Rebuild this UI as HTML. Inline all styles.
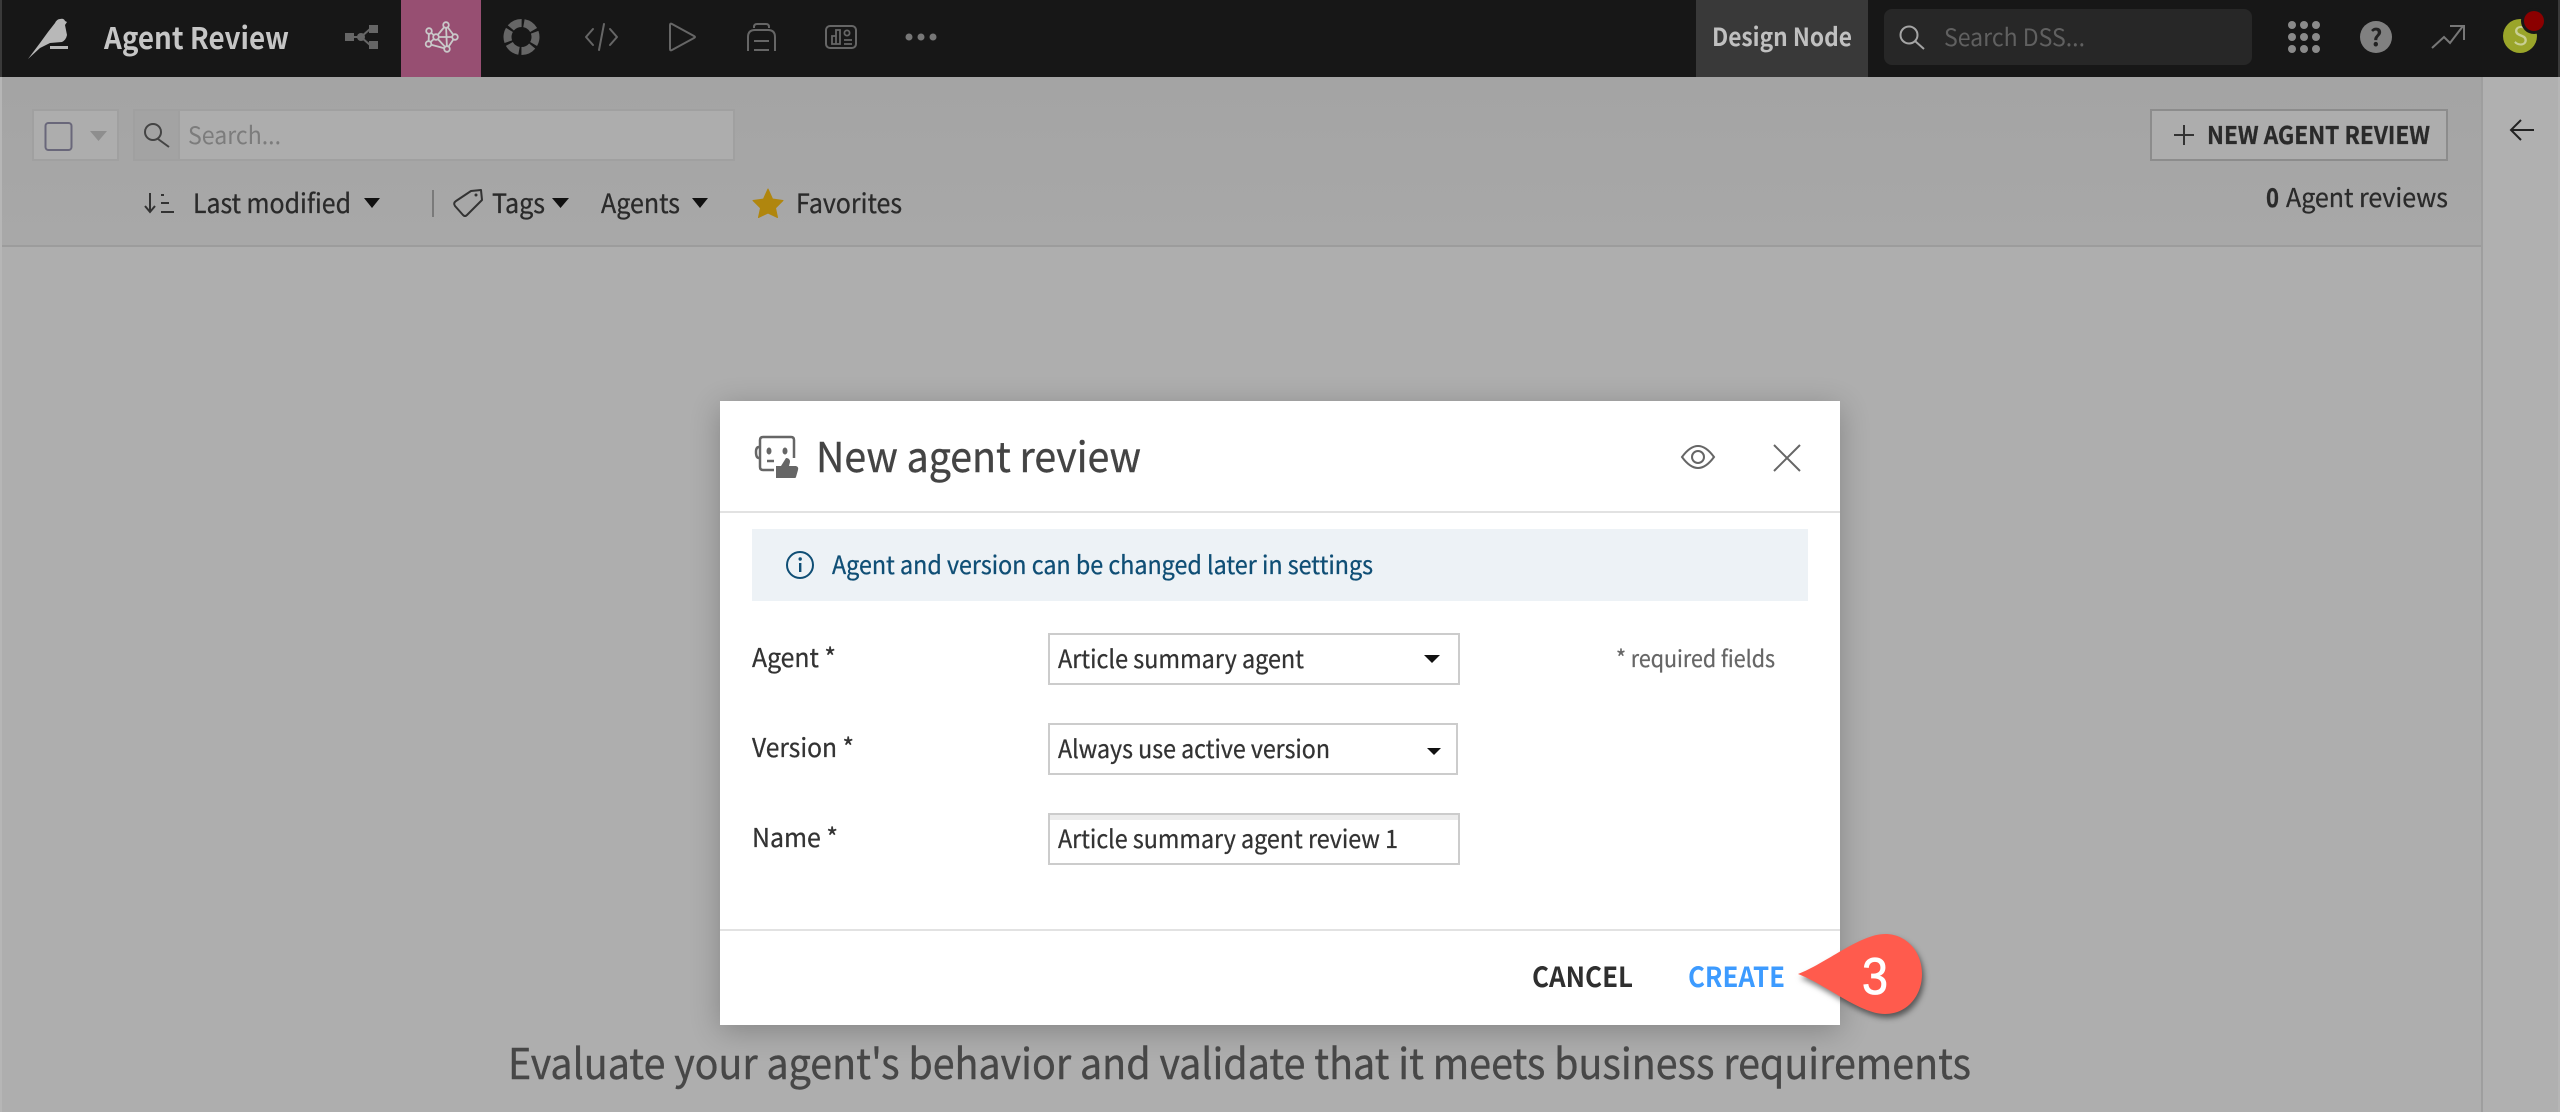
<!DOCTYPE html>
<html lang="en">
<head>
<meta charset="utf-8">
<title>Agent Review</title>
<style>
html,body{margin:0;padding:0;width:2560px;height:1112px;overflow:hidden;background:#aeaeae}
#modal{position:absolute;left:720px;top:401px;width:1120px;height:624px;background:#fff;box-shadow:0 6px 28px rgba(0,0,0,.24)}
#toolbar{position:absolute;left:0;top:77px;width:2481px;height:168px;background:linear-gradient(#a4a4a4,#a8a8a8)}
svg{position:absolute;left:0;top:0}
text{font-family:"Noto Sans CJK SC","Liberation Sans",sans-serif;white-space:pre}
.b{font-weight:700}
text[fill="#2a2a2a"]{stroke:#2a2a2a;stroke-width:.3px}
text[fill="#333"]{stroke:#333;stroke-width:.3px}
text[fill="#444"]{stroke:#444;stroke-width:.4px}
text[fill="#474747"]{stroke:#474747;stroke-width:.4px}
text[fill="#0f4e75"]{stroke:#0f4e75;stroke-width:.3px}
text[fill="#666"]{stroke:#666;stroke-width:.25px}
</style>
</head>
<body>
<div id="toolbar"></div>
<div id="modal"></div>
<svg width="2560" height="1112" viewBox="0 0 2560 1112" xmlns="http://www.w3.org/2000/svg" style="pointer-events:none">
  <!-- sidebar -->
  <rect x="2481" y="77" width="79" height="1035" fill="#b0b0b0"/>
  <rect x="2481" y="77" width="2" height="1035" fill="#9e9e9e"/>
  <rect x="0" y="245" width="2481" height="2" fill="#9c9c9c"/>
  <!-- top bar -->
  <rect width="2560" height="77" fill="#171717"/>
  <rect x="0" y="0" width="2" height="77" fill="#3a3a3a"/>
  <rect x="2558" y="0" width="2" height="77" fill="#3a3a3a"/>
  <rect x="0" y="77" width="2" height="1035" fill="#b6b6b6"/>
  <rect x="2558" y="77" width="2" height="1035" fill="#b6b6b6"/>
  <rect x="401" y="0" width="80" height="77" fill="#974f72"/>
  <rect x="1696" y="0" width="172" height="77" fill="#393939"/>
  <rect x="1884" y="9" width="368" height="56" rx="8" fill="#272727"/>

  <!-- bird -->
  <path d="M28 59 L40 43 L48 32 L55 23 Q57 19 60 19 Q64 18 65 21 L67 22 L65 25 L67 35 Q66 40 62 42 L50 43 L40 48 Z" fill="#b8b8b8"/>
  <rect x="50" y="46" width="18" height="3" fill="#b8b8b8"/>
  <text x="104" y="49" font-size="30" fill="#c6c6c6" class="b" textLength="185" lengthAdjust="spacingAndGlyphs">Agent Review</text>

  <!-- flow -->
  <g fill="#666" stroke="#666">
    <rect x="345" y="33" width="9" height="8" stroke="none"/>
    <rect x="369" y="25" width="9" height="8" stroke="none"/>
    <rect x="369" y="41" width="9" height="8" stroke="none"/>
    <circle cx="361" cy="37" r="4" stroke="none"/>
    <path d="M354 37H360M361 37L370 29M361 37L370 45" stroke-width="2" fill="none"/>
  </g>
  <!-- network -->
  <g fill="none" stroke="#c9c9c9" stroke-width="1.800">
    <path d="M446 25L436 37M446 25L455 37M446 25L447 49M436 37H455M429 31L436 37M429 31L428.500 44M428.500 44L436 37M436 37L447 49M428.500 44L447 49M455 37L447 49"/>
    <circle cx="446" cy="25" r="2.800" fill="#974f72"/>
    <circle cx="429" cy="31" r="2.800" fill="#974f72"/>
    <circle cx="428.500" cy="44" r="2.800" fill="#974f72"/>
    <circle cx="436" cy="37" r="2.800" fill="#974f72"/>
    <circle cx="455" cy="37" r="2.800" fill="#974f72"/>
    <circle cx="447" cy="49" r="2.800" fill="#974f72"/>
  </g>
  <!-- donut -->
  <circle cx="521.500" cy="37" r="14" fill="none" stroke="#666" stroke-width="8" stroke-dasharray="12.200 2.460" transform="rotate(-80 521.500 37)"/>
  <!-- code -->
  <path d="M593 29L586 37L593 45M610 29L617 37L610 45M604 24L599 50" fill="none" stroke="#666" stroke-width="2" stroke-linecap="round" stroke-linejoin="round"/>
  <!-- play -->
  <path d="M670 25Q670 23 672 24L694 36Q696 37 694 38L672 50Q670 51 670 49Z" fill="none" stroke="#666" stroke-width="2"/>
  <!-- stack -->
  <path d="M754 28V27Q754 24 757 24H766Q769 24 769 27V28M748 51V37Q748 30 755 30H768Q775 30 775 37V51M754 41H769M754 50H769" fill="none" stroke="#666" stroke-width="2"/>
  <!-- dashboard -->
  <rect x="826" y="26" width="30" height="22" rx="4" fill="none" stroke="#666" stroke-width="2"/>
  <path d="M832 44V36H836V44ZM836 44V30H840V44ZM844 40H852M844 44H852" fill="none" stroke="#666" stroke-width="1.800"/>
  <circle cx="847" cy="33" r="2.600" fill="none" stroke="#666" stroke-width="1.800"/>
  <!-- dots -->
  <g fill="#777"><circle cx="909" cy="37" r="3.500"/><circle cx="921" cy="37" r="3.500"/><circle cx="933" cy="37" r="3.500"/></g>

  <text x="1712" y="46" font-size="25" fill="#c0c0c0" class="b" textLength="140" lengthAdjust="spacingAndGlyphs">Design Node</text>
  <circle cx="1909" cy="35" r="8.500" fill="none" stroke="#a5a5a5" stroke-width="2"/>
  <path d="M1915 41L1924 49" stroke="#a5a5a5" stroke-width="2"/>
  <text x="1944" y="46" font-size="24" fill="#606060" textLength="141" lengthAdjust="spacingAndGlyphs">Search DSS...</text>

  <!-- apps -->
  <g fill="#8a8a8a">
    <circle cx="2292" cy="25" r="4"/><circle cx="2304" cy="25" r="4"/><circle cx="2316" cy="25" r="4"/>
    <circle cx="2292" cy="37" r="4"/><circle cx="2304" cy="37" r="4"/><circle cx="2316" cy="37" r="4"/>
    <circle cx="2292" cy="49" r="4"/><circle cx="2304" cy="49" r="4"/><circle cx="2316" cy="49" r="4"/>
  </g>
  <circle cx="2376" cy="37" r="16" fill="#808080"/>
  <text x="2370" y="46" font-size="24" fill="#222" class="b">?</text>
  <path d="M2432 48L2444 37L2450 43L2463 26M2450 26H2464V40" fill="none" stroke="#777" stroke-width="2"/>
  <circle cx="2520" cy="36" r="17" fill="#9aa52a"/>
  <text x="2513" y="45" font-size="25" fill="#c9cf94">S</text>
  <circle cx="2534" cy="21" r="13" fill="#171717"/>
  <circle cx="2534" cy="21" r="10" fill="#8b0000"/>

  <!-- checkbox group -->
  <rect x="33" y="110" width="85" height="50" fill="#adadad" stroke="#a0a0a0" stroke-width="2"/>
  <rect x="45.500" y="123" width="26" height="27" rx="3" fill="none" stroke="#69677a" stroke-width="2"/>
  <path d="M90 131H107L98.500 141Z" fill="#8e8e8e"/>
  <!-- search group -->
  <rect x="134" y="110" width="600" height="50" fill="#adadad" stroke="#a0a0a0" stroke-width="2"/>
  <rect x="135" y="111" width="43" height="48" fill="#a3a3a3"/>
  <rect x="178" y="110" width="2" height="50" fill="#a0a0a0"/>
  <circle cx="153" cy="132" r="8" fill="none" stroke="#444" stroke-width="2"/>
  <path d="M158 139L169 147" stroke="#444" stroke-width="2"/>
  <text x="188" y="144" font-size="24" fill="#7c7c7c" textLength="93" lengthAdjust="spacingAndGlyphs">Search...</text>

  <!-- sort -->
  <path d="M150 193V212M145 206L150 212L155 206M161 195H164M161 203H169M161 212H174" fill="none" stroke="#333" stroke-width="2"/>
  <text x="193" y="213" font-size="26.500" fill="#2a2a2a" textLength="158" lengthAdjust="spacingAndGlyphs">Last modified</text>
  <path d="M364 198H380L372 208Z" fill="#111"/>
  <rect x="432" y="190" width="2" height="27" fill="#7a7a7a"/>
  <!-- tag -->
  <path d="M471 191L481 190L482 200L467 215Q465 217 463 215L455 206Q453 203 456 201Z" fill="none" stroke="#333" stroke-width="2" stroke-linejoin="round"/>
  <circle cx="476" cy="195" r="1.500" fill="#333"/>
  <text x="492" y="213" font-size="26.500" fill="#2a2a2a" textLength="53" lengthAdjust="spacingAndGlyphs">Tags</text>
  <path d="M552 198H569L560.500 208Z" fill="#111"/>
  <text x="601" y="213" font-size="26.500" fill="#2a2a2a" textLength="79" lengthAdjust="spacingAndGlyphs">Agents</text>
  <path d="M692 198H708L700 208Z" fill="#111"/>
  <!-- star -->
  <path d="M768 189L772.500 199L783 200.500L775.500 208L777.500 217.500L768 213L758.500 217.500L760.500 208L753 200.500L763.500 199Z" fill="#b0860e" stroke="#b0860e" stroke-width="1" stroke-linejoin="round"/>
  <text x="796" y="213" font-size="26.500" fill="#2a2a2a" textLength="106" lengthAdjust="spacingAndGlyphs">Favorites</text>

  <!-- new agent review -->
  <rect x="2151" y="110" width="296" height="50" fill="#adadad" stroke="#8c8c8c" stroke-width="2"/>
  <path d="M2174 135H2194M2184 125V145" stroke="#333" stroke-width="2"/>
  <text x="2207" y="144" font-size="24.500" fill="#2a2a2a" class="b" textLength="223" lengthAdjust="spacingAndGlyphs">NEW AGENT REVIEW</text>
  <text x="2266" y="207" font-size="26" fill="#2a2a2a" class="b" textLength="13" lengthAdjust="spacingAndGlyphs">0</text>
  <text x="2286" y="207" font-size="26" fill="#2a2a2a" textLength="162" lengthAdjust="spacingAndGlyphs">Agent reviews</text>
  <path d="M2534 130H2511M2521 120L2511 130L2521 140" fill="none" stroke="#222" stroke-width="2"/>

  <!-- modal header -->
  <path d="M774 470H763Q760 470 760 467V440Q760 437 763 437H791Q794 437 794 440V458" fill="none" stroke="#666" stroke-width="2.500"/>
  <path d="M759 447Q756 447 756 452Q756 458 759 458" fill="none" stroke="#666" stroke-width="2.500"/>
  <ellipse cx="769" cy="451" rx="2.500" ry="3.500" fill="#666"/>
  <ellipse cx="785" cy="451" rx="2.500" ry="3.500" fill="#666"/>
  <path d="M767 461H774" stroke="#666" stroke-width="2.500"/>
  <path d="M776 466H781L786 458Q790 458 790 462L789 466H796Q799 467 798 470L796 477Q796 478 794 478H776Z" fill="#666"/>
  <text x="816" y="472" font-size="41" fill="#444" textLength="325" lengthAdjust="spacingAndGlyphs">New agent review</text>
  <!-- eye -->
  <path d="M1682 457Q1698 435 1714 457Q1698 479 1682 457Z" fill="none" stroke="#666" stroke-width="2"/>
  <circle cx="1698" cy="457" r="6" fill="none" stroke="#666" stroke-width="2"/>
  <path d="M1774 445L1800 471M1800 445L1774 471" stroke="#666" stroke-width="2"/>
  <rect x="720" y="511" width="1120" height="2" fill="#e2e2e2"/>

  <!-- banner -->
  <rect x="752" y="529" width="1056" height="72" fill="#edf2f6"/>
  <circle cx="800" cy="565" r="13" fill="none" stroke="#0f4e75" stroke-width="2"/>
  <rect x="799" y="563" width="2.400" height="9" fill="#0f4e75"/>
  <circle cx="800.200" cy="559" r="1.700" fill="#0f4e75"/>
  <text x="832" y="574" font-size="25" fill="#0f4e75" textLength="541" lengthAdjust="spacingAndGlyphs">Agent and version can be changed later in settings</text>

  <!-- form -->
  <text x="752" y="667" font-size="26" fill="#333" textLength="84" lengthAdjust="spacingAndGlyphs">Agent *</text>
  <rect x="1049" y="634" width="410" height="50" fill="#fff" stroke="#ccc" stroke-width="2"/>
  <text x="1058" y="668" font-size="25" fill="#333" textLength="246" lengthAdjust="spacingAndGlyphs">Article summary agent</text>
  <path d="M1424 655H1440L1432 663Z" fill="#111"/>
  <text x="1616" y="667" font-size="23" fill="#666" textLength="159" lengthAdjust="spacingAndGlyphs">* required fields</text>

  <text x="752" y="757" font-size="26" fill="#333" textLength="102" lengthAdjust="spacingAndGlyphs">Version *</text>
  <rect x="1049" y="724" width="408" height="50" fill="#fff" stroke="#ccc" stroke-width="2"/>
  <text x="1058" y="758" font-size="25" fill="#333" textLength="272" lengthAdjust="spacingAndGlyphs">Always use active version</text>
  <path d="M1427 748H1441L1434 755Z" fill="#111"/>

  <text x="752" y="847" font-size="26" fill="#333" textLength="86" lengthAdjust="spacingAndGlyphs">Name *</text>
  <rect x="1049" y="814" width="410" height="50" fill="#fff" stroke="#ccc" stroke-width="2"/>
  <rect x="1050" y="815" width="408" height="5" fill="#ececec"/>
  <text x="1058" y="848" font-size="25" fill="#333" textLength="340" lengthAdjust="spacingAndGlyphs">Article summary agent review 1</text>

  <rect x="720" y="929" width="1120" height="2" fill="#e2e2e2"/>
  <text x="1532" y="987" font-size="28" fill="#2f2f2f" class="b" textLength="101" lengthAdjust="spacingAndGlyphs">CANCEL</text>
  <text x="1688" y="987" font-size="28" fill="#3d9bff" class="b" textLength="97" lengthAdjust="spacingAndGlyphs">CREATE</text>

  <!-- callout -->
  <path d="M1798 974C1825 964 1860 934 1885 934C1907 934 1922 952 1922 974C1922 996 1907 1014 1885 1014C1860 1014 1825 984 1798 974Z" fill="#ff5b4d" style="filter:drop-shadow(2px 4px 3px rgba(0,0,0,.5))"/>
  <text x="1862" y="994" font-size="52" fill="#fff" stroke="#fff" stroke-width=".8" style="font-family:'Liberation Sans',sans-serif" textLength="26" lengthAdjust="spacingAndGlyphs">3</text>

  <text x="508" y="1079" font-size="42" fill="#474747" textLength="1463" lengthAdjust="spacingAndGlyphs">Evaluate your agent's behavior and validate that it meets business requirements</text>
</svg>
</body>
</html>
